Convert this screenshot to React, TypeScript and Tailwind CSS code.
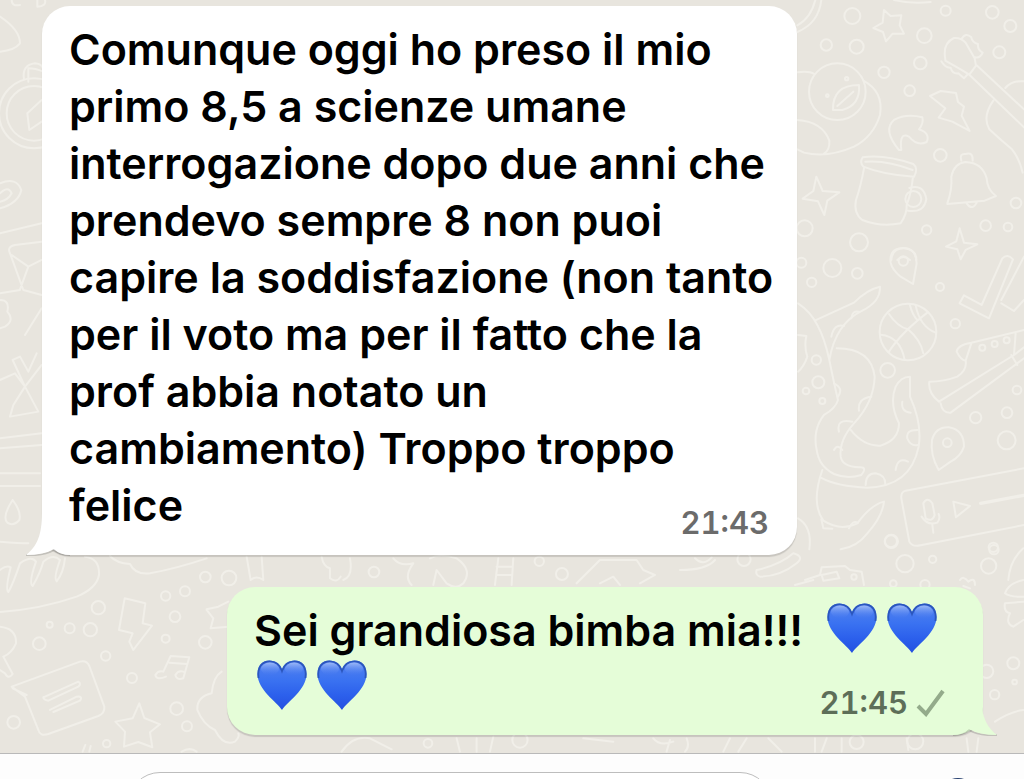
import type { ReactNode } from "react";

const CIRCLES_TOP = [
  [205, 48, 24], [127, 135, 17], [218, 140, 21], [421, 107, 22], [485, 32, 15],
  [625, 37, 19], [679, 78, 18], [646, 157, 18], [409, 189, 19], [300, 217, 17],
  [377, 272, 16], [469, 466, 19], [696, 609, 16], [605, 677, 16], [672, 681, 13],
  [428, 690, 14], [225, 727, 27], [62, 685, 24], [188, 236, 5], [130, 287, 4],
];

const CIRCLES_MIDDLE = [
  [145, 54, 27], [220, 70, 16], [83, 97, 14], [52, 38, 15], [468, 111, 12],
  [514, 221, 14], [311, 361, 22], [97, 330, 14], [103, 397, 18], [66, 423, 10],
  [115, 453, 9], [575, 503, 17], [669, 488, 16], [668, 571, 27], [699, 420, 13],
  [322, 874, 20], [628, 892, 14],
];

const CIRCLES_BOTTOM = [
  [295, 383, 20], [149, 434, 9], [209, 445, 15], [271, 449, 20], [118, 491, 19],
  [555, 334, 15], [497, 348, 14], [616, 291, 16], [687, 294, 22], [525, 410, 16],
  [497, 476, 12], [616, 487, 19], [317, 528, 14], [396, 594, 15], [530, 686, 19],
  [561, 739, 15], [320, 791, 11], [41, 727, 19],
];

const CIRCLES_RIGHT = [
  [633, 184, 18], [675, 251, 26], [758, 238, 11], [926, 258, 23], [942, 209, 14],
  [192, 238, 20], [1000, 550, 18], [920, 574, 20], [944, 644, 14], [1004, 606, 7],
  [530, 786, 21], [706, 784, 24], [640, 311, 10], [735, 314, 14],
];

function Circles({ items }: { items: number[][] }) {
  return (
    <>
      {items.map(([cx, cy, r]) => (
        <circle key={`${cx}-${cy}`} cx={cx} cy={cy} r={r} />
      ))}
    </>
  );
}

function Wallpaper() {
  return (
    <svg
      className="pointer-events-none absolute inset-0 h-full w-full"
      viewBox="0 0 1024 753"
      preserveAspectRatio="xMaxYMin slice"
      fill="none"
      stroke="#f1efe9"
      strokeWidth="6"
      strokeLinecap="round"
      strokeLinejoin="round"
      aria-hidden="true"
    >
      {/* fruit, star, guitar, mug, bell */}
      <g transform="translate(784 0) scale(.3333)">
        <Circles items={CIRCLES_TOP} />
        <path d="M40 96Q104 70 112 0M40 76Q80 55 94 0M330 0Q380 12 440 6" />
        <path d="M300 30L320 48L352 46L347 76L360 101L326 101L306 124L297 96L268 84L296 68Z" />
        <circle cx="160" cy="275" r="85" />
        <path d="M40 217Q75 212 91 222M238 242Q300 275 288 345Q268 410 210 440Q130 475 60 458L40 448M40 360Q115 365 136 422Q138 450 120 461M147 330Q145 255 225 255Q230 315 175 330ZM160 318L208 275" />
        <path d="M345 450Q295 390 330 360Q365 340 415 352Q420 370 405 388Q440 400 428 426Q400 440 375 410Q345 395 352 450Z" />
        <path d="M438 288L470 273L516 279L522 306L540 320L533 347L557 393L505 365L464 353L484 325Z" />
        <path d="M484 178Q475 130 510 114Q530 112 545 128L572 175L576 197L556 224L530 208L484 182ZM532 118Q545 95 562 112Q565 128 582 132Q580 150 596 158Q590 175 572 172M472 184Q485 205 500 203Q505 222 523 220L540 235L552 222M556 224L720 382M578 196L720 328M664 264Q685 240 720 244M628 302Q594 350 616 388Q650 420 684 448Q706 475 716 518" />
        <path d="M236 472Q300 462 388 492Q404 505 390 530Q300 525 238 500Q226 488 236 472ZM244 485Q310 480 386 510M240 505Q230 560 216 600Q208 640 235 660Q290 682 350 670Q370 640 368 615Q382 580 387 530M376 564Q418 550 427 597Q420 640 372 632" />
        <circle cx="388" cy="597" r="24" />
        <path d="M490 610Q505 570 502 530Q510 490 545 486Q595 488 608 535Q610 570 636 588L602 602L490 612ZM548 610Q565 635 580 605M532 482Q525 460 545 462Q568 455 566 482" />
        <path d="M97 530L116 573L166 577L130 602L121 645L102 604L56 596L88 573ZM527 685L540 728L580 733L545 750L530 778L520 748L486 740L517 724Z" />
        <path d="M322 780Q325 744 360 745Q398 750 397 780M340 780Q358 762 378 780" />
      </g>

      {/* octopus, ball, shoe, voice note */}
      <g transform="translate(784 250) scale(.3333)">
        <Circles items={CIRCLES_MIDDLE} />
        <path d="M387 102L398 40Q396 -8 356 -6Q315 -4 320 38Q325 60 350 80Z" />
        <circle cx="358" cy="33" r="14" />
        <path d="M527 160L540 136L593 165L655 25Q670 10 687 28L615 205ZM652 150L720 20M652 160L690 183L720 150" />
        <circle cx="372" cy="246" r="85" />
        <path d="M315 192Q340 230 372 238Q410 270 418 310M290 254Q350 260 362 330M315 305Q350 250 430 188M377 162Q385 195 400 210M395 166Q408 230 455 248" />
        <path d="M42 160Q80 185 100 225Q122 265 136 330Q150 400 162 450Q155 475 120 495Q85 540 98 600Q105 650 150 672Q190 688 232 675Q252 650 225 652Q175 650 170 620Q165 570 210 520Q270 455 272 380Q262 295 158 295M92 212L210 158Q250 118 288 110Q290 155 235 182Q155 220 136 330" />
        <path d="M200 540Q240 590 290 587Q345 570 345 520Q315 460 335 410Q350 380 378 380L378 440Q415 520 404 590Q380 710 250 713Q160 710 112 684M115 660Q80 760 118 812Q170 845 220 820Q260 765 300 755Q295 800 250 850Q220 890 170 898M42 805Q85 830 76 898" />
        <path d="M142 260Q150 220 180 228M202 205Q205 180 225 185M150 400Q180 415 162 440M225 482Q220 445 262 440M165 545Q155 505 205 515M150 600Q160 580 175 600M355 455Q350 485 380 488M400 540Q365 540 370 565Q380 590 402 585M335 660Q340 620 372 635M245 705Q245 670 275 670Q305 675 304 705M112 808L118 835L145 836M195 835Q205 810 222 818M42 255L67 258Q60 290 70 320Q60 350 42 365" />
        <path d="M720 240L562 278Q520 285 518 305Q530 330 545 332Q550 360 520 380Q480 395 436 395Q432 430 465 455L690 315L720 292M470 460Q475 490 500 488L720 325M545 332L562 280M695 250L690 315M682 315L700 345" />
        <circle cx="595" cy="293" r="9" />
        <circle cx="632" cy="282" r="9" />
        <circle cx="668" cy="271" r="9" />
        <path d="M464 660Q438 615 444 570Q455 530 495 532Q540 540 540 590Q530 620 500 635Z" />
        <circle cx="490" cy="578" r="13" />
        <path d="M720 655L365 722Q350 726 352 745L376 875Q385 892 410 886L720 825M418 760Q430 738 445 760L452 795Q445 818 425 805ZM413 800Q430 828 460 818Q470 805 464 792M445 824L448 848M508 755L558 768L516 802Z" />
        <path d="M590 760L720 736" strokeWidth="10" />
      </g>

      {/* bolt, notes, envelope, star */}
      <g transform="translate(0 480) scale(.3333)">
        <Circles items={CIRCLES_BOTTOM} />
        <path d="M0 18H120M0 185Q60 190 85 190M38 60Q5 110 22 128Q40 140 58 120Q65 95 38 60" />
        <path d="M0 270Q20 255 32 262Q15 330 25 336Q40 310 60 250Q95 225 108 245Q85 310 98 318Q120 280 130 245Q160 220 180 240Q160 295 170 304Q190 280 195 235M255 230Q300 235 297 285Q290 325 230 350Q120 388 0 396" />
        <path d="M330 228Q350 250 390 252Q405 285 450 280Q530 265 620 235M740 230L752 300M785 230L790 300Q770 285 752 300M965 230Q970 260 990 265V295Q1010 310 1022 290" />
        <path d="M374 355L436 370L428 430L456 437L400 510L388 485L398 460L357 450Z" />
        <path d="M498 590Q470 602 466 585Q475 570 490 575L512 528L568 532L550 595Q530 602 526 585Q535 570 550 575M508 548L560 552" />
        <path d="M35 620L240 545Q260 540 268 558L313 680Q315 700 295 708L145 762Q120 770 115 750L75 650ZM38 625L80 645M130 652L235 605Q245 612 235 620L145 662Q130 660 130 652M150 690L230 650Q250 648 240 662L160 696" />
        <path d="M418 670L433 714L480 733L450 757L457 802L415 786L372 800L375 755L346 725L398 715Z" />
        <path d="M620 388L655 380L685 365M620 390L640 415L632 445L685 440M0 440Q50 445 48 490Q35 520 10 530L38 582Q25 600 15 580L0 570M665 575Q640 590 635 640Q590 650 592 690Q610 735 645 750Q670 800 705 785Q720 770 715 760" />
        <path d="M248 815L256 795M268 815L272 798M545 815Q570 800 590 815" />
        {/* strip between the bubbles */}
        <path d="M1050 235Q1060 290 1030 300M1180 235Q1200 260 1240 250Q1210 290 1235 315M1290 235Q1320 220 1370 235Q1420 270 1390 310Q1370 330 1340 310L1310 270L1300 315M1495 235L1485 315M1540 235L1535 315M1490 260H1535M1490 285H1535M1730 310L1800 240H1910L1930 270L1965 285L1920 310M1800 310L1840 290L1860 315" />
        <circle cx="1122" cy="276" r="16" />
        <circle cx="1686" cy="282" r="18" />
        <circle cx="1618" cy="244" r="14" />
        <path d="M1025 815Q1060 765 1110 775L1175 808M1370 775L1380 815M1430 775V815M1480 770L1470 815M1750 775L1840 785M1960 775Q1980 800 2020 785M2000 815L2010 780" />
        <circle cx="1284" cy="790" r="13" />
        <circle cx="1560" cy="780" r="23" />
      </g>

      {/* camera, cactus, burger */}
      <g transform="translate(680 480) scale(.3333)">
        <Circles items={CIRCLES_RIGHT} />
        <path d="M0 270Q80 270 105 240M45 235Q70 260 95 232M230 270Q300 255 340 220Q375 230 350 250Q300 290 240 290Q225 285 230 270M375 300L420 285L425 262L495 258L510 270L545 275L552 315M425 285L470 275L478 295L430 302ZM345 315L400 300" />
        <circle cx="522" cy="291" r="8" />
        <path d="M840 300Q850 285 865 305Q885 290 885 315M850 318L870 325M1030 205Q990 240 985 300M1030 300Q985 310 975 340Q990 352 1030 350M1030 365L975 370Q970 395 990 400Q975 430 1000 440L1030 420M1030 690Q990 695 945 725" />
        <path d="M20 775Q30 800 15 815M130 815L150 775M200 775L175 815M265 775L305 815M405 775V815M440 775L425 815M485 775V815M680 775L685 810M860 775L865 815M895 775L890 815" />
      </g>

      {/* pear, stopwatch, clip, envelope, bow */}
      <g transform="scale(.3333)">
        <path d="M35 0Q35 20 60 15M112 0V20Q140 18 135 0M0 50Q60 90 60 130Q45 150 0 155" />
        <circle cx="102" cy="340" r="105" />
        <circle cx="102" cy="340" r="82" />
        <path d="M72 238Q65 195 105 190Q128 192 130 210M85 245V205Q105 205 130 215M82 340L125 300M82 340L88 390L125 365" />
        <path d="M0 550Q50 530 64 570Q55 610 0 625M0 580Q25 555 35 580Q25 600 0 605M0 700L125 670M30 760Q20 740 45 735L125 725M30 760L70 870L125 885M35 765L85 800L125 780M60 868L85 800M0 880L60 870M0 900Q30 900 22 935Q45 960 15 980L0 985M75 1005L125 925" />
        <path d="M0 1140L45 1120L75 1160L40 1215L30 1250L115 1235L75 1160L125 1095M75 1160L38 1080L60 1070L85 1115L110 1060M0 1315L125 1300M0 1345L125 1335M0 1420H120" />
      </g>
    </svg>
  );
}

function Heart() {
  return (
    <svg className="h-[52px] w-[52px] shrink-0" viewBox="0 0 52 52" role="img" aria-label="💙">
      <defs>
        <linearGradient id="heart" x1="0" y1="0" x2="0" y2="1">
          <stop offset="0" stopColor="#5583ee" />
          <stop offset="0.4" stopColor="#3a72f1" />
          <stop offset="0.7" stopColor="#2c60ec" />
          <stop offset="1" stopColor="#2450e0" />
        </linearGradient>
        <linearGradient id="shine" x1="0" y1="0" x2="0" y2="1">
          <stop offset="0" stopColor="#a9c2f8" stopOpacity="0.85" />
          <stop offset="1" stopColor="#4c7ff2" stopOpacity="0" />
        </linearGradient>
      </defs>
      <path
        d="M26 51C21 43 1.500 31 1.500 15C1.500 6 7 1.500 13.500 1.500C19.500 1.500 24 5 26 10C28 5 32.500 1.500 38.500 1.500C45 1.500 50.500 6 50.500 15C50.500 31 31 43 26 51Z"
        fill="url(#heart)"
      />
      <path
        d="M2.500 19C1 7 7 2.300 13.500 2.300C20 2.300 24 6 26 12C28 6 32 2.300 38.500 2.300C45 2.300 51 7 49.500 19"
        fill="none"
        stroke="#2b56bd"
        strokeWidth="1.800"
      />
      <ellipse cx="14" cy="10" rx="9" ry="6.500" fill="url(#shine)" />
      <ellipse cx="38" cy="10" rx="9" ry="6.500" fill="url(#shine)" />
    </svg>
  );
}

type BubbleProps = {
  time: string;
  outgoing?: boolean;
  children: ReactNode;
};

function Bubble({ time, outgoing = false, children }: BubbleProps) {
  return (
    <article
      className={
        outgoing
          ? "relative w-[756px] max-w-full self-end rounded-[28px] bg-[#e5fdd8] px-[27px] pt-[15px] pb-[19px] shadow-[0_2px_1px_rgba(0,0,0,0.14)]"
          : "relative w-[755px] max-w-full rounded-[28px] bg-white px-[27px] pt-[15px] pb-[21px] shadow-[0_2px_1px_rgba(0,0,0,0.14)]"
      }
    >
      <svg
        className={
          outgoing
            ? "absolute -right-[14px] -bottom-px h-[46px] w-[44px] -scale-x-100"
            : "absolute -bottom-px -left-[16px] h-[46px] w-[44px]"
        }
        viewBox="0 0 44 46"
        aria-hidden="true"
      >
        <path d="M0 45Q18 46 28 40Q34 45 44 45" fill="none" stroke="#000" strokeOpacity="0.16" strokeWidth="2" />
        <path d="M16 0C16 20 14 34 0 45Q18 45 28 39Q34 45 44 45V0Z" fill={outgoing ? "#e5fdd8" : "#fff"} />
      </svg>
      <div className="relative text-[43px] leading-[57px] font-[580] text-black">{children}</div>
      <div
        className={
          outgoing
            ? "absolute right-[38px] bottom-[14px] flex items-center gap-2 text-[31px] leading-[36px] font-[580] text-[#5d6e58] tabular-nums"
            : "absolute right-[28px] bottom-[14px] text-[31px] leading-[36px] font-[580] text-[#6b6b6b] tabular-nums"
        }
      >
        <time>{time}</time>
        {outgoing && (
          <svg className="h-[28px] w-[29px]" viewBox="0 0 29 28" aria-hidden="true">
            <path d="M2 17L10 25L27 2" fill="none" stroke="#94ab8b" strokeWidth="4" />
          </svg>
        )}
      </div>
    </article>
  );
}

export default function App() {
  return (
    <div className="flex h-screen flex-col overflow-hidden bg-[#fdfdfd] font-[Inter,sans-serif]">
      <main className="relative flex shrink-0 flex-col gap-8 bg-[#e8e5de] pt-[6px] pr-[41px] pb-[18px] pl-[42px]">
        <Wallpaper />
        <Bubble time="21:43">
          <p className="whitespace-nowrap">
            Comunque oggi ho preso il mio
            <br />
            primo 8,5 a scienze umane
            <br />
            interrogazione dopo due anni che
            <br />
            prendevo sempre 8 non puoi
            <br />
            capire la soddisfazione (non tanto
            <br />
            per il voto ma per il fatto che la
            <br />
            prof abbia notato un
            <br />
            cambiamento) Troppo troppo
            <br />
            felice
          </p>
        </Bubble>
        <Bubble time="21:45" outgoing>
          <div className="flex h-[57px] items-start justify-between pr-[18px]">
            <p className="whitespace-nowrap">Sei grandiosa bimba mia!!!</p>
            <div className="flex gap-2">
              <Heart />
              <Heart />
            </div>
          </div>
          <div className="flex h-[57px] items-start gap-2 pl-0.5">
            <Heart />
            <Heart />
          </div>
        </Bubble>
      </main>
      <footer className="flex shrink-0 gap-36 border-t border-[#b9b9b9] pt-[18px] pr-6 pl-32">
        <input
          type="text"
          aria-label="Messaggio"
          className="h-16 min-w-0 flex-1 rounded-full border border-[#bdbdbd] bg-white px-6 text-[31px] outline-none"
        />
        <button type="button" aria-label="Fotocamera" className="mt-1 h-16 w-[84px] shrink-0">
          <svg
            className="mx-auto h-[60px] w-[60px]"
            viewBox="0 0 60 60"
            fill="none"
            stroke="#27406f"
            strokeWidth="4"
            aria-hidden="true"
          >
            <path d="M8 16H17L22 5Q24 2 30 2Q36 2 38 5L43 16H52V50H8Z" />
            <circle cx="30" cy="32" r="10" />
          </svg>
        </button>
      </footer>
    </div>
  );
}
